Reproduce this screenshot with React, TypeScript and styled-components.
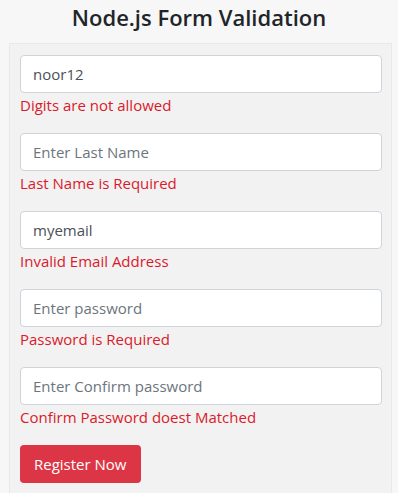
import { FC, ReactElement } from "react";
import styled, { createGlobalStyle } from "styled-components";

const GlobalStyle = createGlobalStyle`
  html, body {
    margin: 0;
    padding: 0;
    background: #f7f7f7;
    font-family: "Open Sans", "Noto Sans", sans-serif;
    color: #212529;
  }
  * { box-sizing: border-box; }
`;

const Page = styled.div`
  width: 398px;
  height: 493px;
  overflow: hidden;
`;

const Title = styled.h2`
  margin: 0;
  height: 43px;
  padding-top: 2px;
  text-align: center;
  font-size: 22px;
  font-weight: 600;
  line-height: 30px;
  color: #212529;
`;

const Panel = styled.form`
  margin: 0 6px 0 9px;
  min-height: 460px;
  background: #f2f2f2;
  border: 1px solid #e9e9e9;
  padding: 11px 9px 0 10px;
  display: flex;
  flex-direction: column;
`;

const Group = styled.div`
  display: flex;
  flex-direction: column;
  margin-bottom: 16px;
`;

const Input = styled.input`
  height: 38px;
  width: 100%;
  border: 1px solid #ced4da;
  border-radius: 4px;
  background: #fff;
  padding: 0 12px;
  font-family: inherit;
  font-size: 15px;
  color: #495057;
  outline: none;
  &::placeholder {
    color: #6c757d;
  }
`;

const ErrorText = styled.div`
  height: 24px;
  line-height: 24px;
  font-size: 15px;
  color: #d91a2a;
`;

const Button = styled.button`
  align-self: flex-start;
  height: 38px;
  padding: 0 14px;
  border: none;
  border-radius: 4px;
  background: #dc3545;
  color: #fff;
  font-family: inherit;
  font-size: 15px;
`;

interface Field {
  value?: string;
  placeholder: string;
  error: string;
}

const fields: Field[] = [
  { value: "noor12", placeholder: "Enter First Name", error: "Digits are not allowed" },
  { placeholder: "Enter Last Name", error: "Last Name is Required" },
  { value: "myemail", placeholder: "Enter Email", error: "Invalid Email Address" },
  { placeholder: "Enter password", error: "Password is Required" },
  { placeholder: "Enter Confirm password", error: "Confirm Password doest Matched" },
];

const App: FC = (): ReactElement => {
  return (
    <Page>
      <GlobalStyle />
      <Title>Node.js Form Validation</Title>
      <Panel onSubmit={(e) => e.preventDefault()}>
        {fields.map((f, i) => (
          <Group key={i}>
            <Input defaultValue={f.value} placeholder={f.placeholder} />
            <ErrorText>{f.error}</ErrorText>
          </Group>
        ))}
        <Button type="submit">Register Now</Button>
      </Panel>
    </Page>
  );
};

export default App;
